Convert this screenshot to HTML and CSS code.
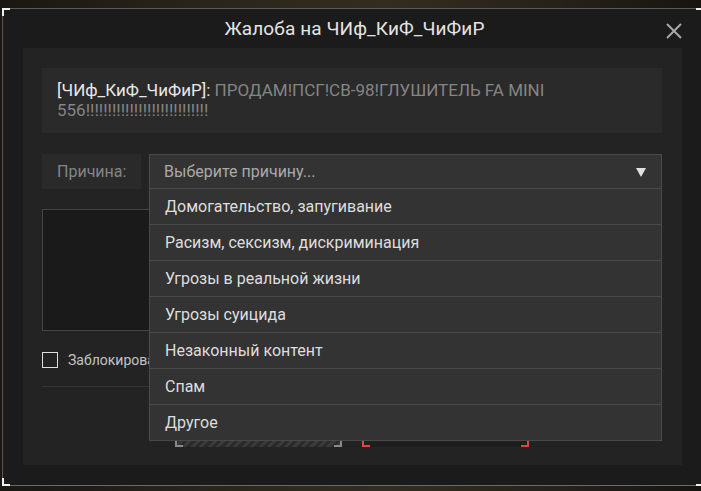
FILE: index.html
```html
<!DOCTYPE html>
<html lang="ru">
<head>
    <meta charset="UTF-8">
    <title>Жалоба</title>
    <link rel="stylesheet" href="styles.css">
</head>
<body>
<div class="scene">
    <div class="modal">
        <span class="corner corner-tl"></span>
        <span class="corner corner-tr"></span>
        <span class="corner corner-bl"></span>
        <span class="corner corner-br"></span>
        <div class="modal-header">
            <h1 class="modal-title">Жалоба на ЧИф_КиФ_ЧиФиР</h1>
            <button class="close-btn" type="button">
                <svg width="16" height="16" viewBox="0 0 16 16">
                    <path d="M1 1 L15 15 M15 1 L1 15" stroke="#a8a8a8" stroke-width="2" fill="none"/>
                </svg>
            </button>
        </div>
        <div class="modal-body">
            <p class="message"><b class="message-author">[ЧИф_КиФ_ЧиФиР]:</b> ПРОДАМ!ПСГ!СВ-98!ГЛУШИТЕЛЬ FA MINI 556!!!!!!!!!!!!!!!!!!!!!!!!!!!!</p>
            <div class="reason-row">
                <label class="reason-label">Причина:</label>
                <div class="select">
                    <div class="select-value">
                        <span>Выберите причину...</span>
                        <svg width="12" height="10" viewBox="0 0 12 10">
                            <path d="M1 1 H11 L6 10 Z" fill="#e0e0e0"/>
                        </svg>
                    </div>
                    <ul class="select-options">
                        <li>Домогательство, запугивание</li>
                        <li>Расизм, сексизм, дискриминация</li>
                        <li>Угрозы в реальной жизни</li>
                        <li>Угрозы суицида</li>
                        <li>Незаконный контент</li>
                        <li>Спам</li>
                        <li>Другое</li>
                    </ul>
                </div>
            </div>
            <textarea class="comment"></textarea>
            <label class="block-check"><span class="checkbox"></span><span class="check-text">Заблокировать игрока</span></label>
            <div class="divider"></div>
            <div class="button-group">
                <button class="btn btn-cancel" type="button">Отмена</button>
                <button class="btn btn-submit" type="button">Отправить</button>
            </div>
        </div>
    </div>
</div>
</body>
</html>
```

FILE: styles.css
```css
html, body {
    margin: 0;
    height: 100%;
    overflow: hidden;
}

body {
    font-family: Roboto, "Noto Sans", sans-serif;
}

.scene {
    height: 491px;
    padding: 8px 0 0 2px;
    box-sizing: border-box;
    background: linear-gradient(90deg, #1a1712 0%, #2a251b 30%, #332d20 55%, #262119 80%, #171410 100%);
}

.modal {
    position: relative;
    width: 702px;
    height: 478px;
    box-sizing: border-box;
    background: #1b1b1b;
    border-top: 1px solid #5a5a5a;
    border-bottom: 1px solid #6a6a6a;
    border-left: 1px solid #555;
}

.corner {
    position: absolute;
    width: 6px;
    height: 6px;
    border: 0 solid #f0f0f0;
}

.corner-tl {
    top: -1px;
    left: -1px;
    border-top-width: 2px;
    border-left-width: 2px;
}

.corner-tr {
    top: -1px;
    right: 0;
    border-top-width: 2px;
    border-right-width: 2px;
}

.corner-bl {
    bottom: -1px;
    left: -1px;
    border-bottom-width: 2px;
    border-left-width: 2px;
}

.corner-br {
    bottom: -1px;
    right: 0;
    border-bottom-width: 2px;
    border-right-width: 2px;
}

.modal-header {
    position: relative;
    height: 39px;
    display: flex;
    align-items: center;
    justify-content: center;
}

.modal-title {
    margin: 0 0 0 2px;
    font-size: 19px;
    font-weight: normal;
    color: #e4e4e4;
    letter-spacing: 0.1px;
}

.close-btn {
    position: absolute;
    top: 14px;
    left: 663px;
    padding: 0;
    border: none;
    background: none;
    width: 16px;
    height: 16px;
}

.modal-body {
    margin-left: 20px;
    width: 659px;
    height: 417px;
    box-sizing: border-box;
    padding: 20px 20px 0 19px;
    background: #232323;
}

.message {
    margin: 0;
    height: 65px;
    box-sizing: border-box;
    padding: 12px 15px;
    background: #2a2a2a;
    font-size: 17px;
    line-height: 20px;
    color: #858585;
}

.message-author {
    font-weight: normal;
    color: #e8e8e8;
}

.reason-row {
    margin-top: 21px;
    display: flex;
    gap: 8px;
}

.reason-label {
    width: 99px;
    height: 35px;
    box-sizing: border-box;
    padding-left: 15px;
    line-height: 35px;
    font-size: 16px;
    color: #858585;
    background: #2a2a2a;
}

.select {
    position: relative;
    flex: 1;
}

.select-value {
    height: 35px;
    box-sizing: border-box;
    border: 1px solid #4a4a4a;
    background: #333;
    display: flex;
    align-items: center;
    justify-content: space-between;
    padding: 0 14px 0 14px;
    font-size: 16px;
    color: #aaa;
}

.select-options {
    position: absolute;
    top: 35px;
    left: 0;
    right: 0;
    margin: 0;
    padding: 0;
    list-style: none;
    background: #333;
    border: 1px solid #4a4a4a;
    border-top: none;
    z-index: 2;
}

.select-options li {
    height: 35px;
    line-height: 35px;
    padding-left: 15px;
    border-bottom: 1px solid #4a4a4a;
    font-size: 16px;
    color: #dedede;
}

.select-options li:last-child {
    border-bottom: none;
}

.comment {
    display: block;
    margin-top: 20px;
    width: 100%;
    height: 122px;
    box-sizing: border-box;
    background: #1a1a1a;
    border: 1px solid #444;
    resize: none;
}

.block-check {
    margin-top: 21px;
    width: 107px;
    display: flex;
    align-items: center;
    gap: 10px;
    height: 16px;
    overflow: hidden;
    white-space: nowrap;
    font-size: 14px;
    color: #c4c4c4;
}

.checkbox {
    flex: none;
    width: 16px;
    height: 16px;
    box-sizing: border-box;
    border: 1px solid #e0e0e0;
}

.check-text {
    overflow: hidden;
}

.divider {
    margin-top: 18px;
    height: 1px;
    background: #353535;
}

.button-group {
    margin-top: 20px;
    display: flex;
    justify-content: center;
    gap: 20px;
}

.btn {
    position: relative;
    width: 167px;
    height: 40px;
    border: none;
    font-family: Roboto, sans-serif;
    font-size: 15px;
    color: #ccc;
}

.btn::before, .btn::after {
    content: "";
    position: absolute;
    bottom: 0;
    width: 6px;
    height: 5px;
    border-bottom: 2px solid;
}

.btn::before {
    left: 0;
    border-left: 2px solid;
}

.btn::after {
    right: 0;
    border-right: 2px solid;
}

.btn-cancel {
    background: repeating-linear-gradient(135deg, #2a2a2a 0 3px, #3a3a3a 3px 6px);
    color: #999;
}

.btn-cancel::before, .btn-cancel::after {
    border-color: #8a8a8a;
}

.btn-submit {
    background: #1e1e1e;
    color: #ccc;
}

.btn-submit::before, .btn-submit::after {
    border-color: #d9474a;
}
```
